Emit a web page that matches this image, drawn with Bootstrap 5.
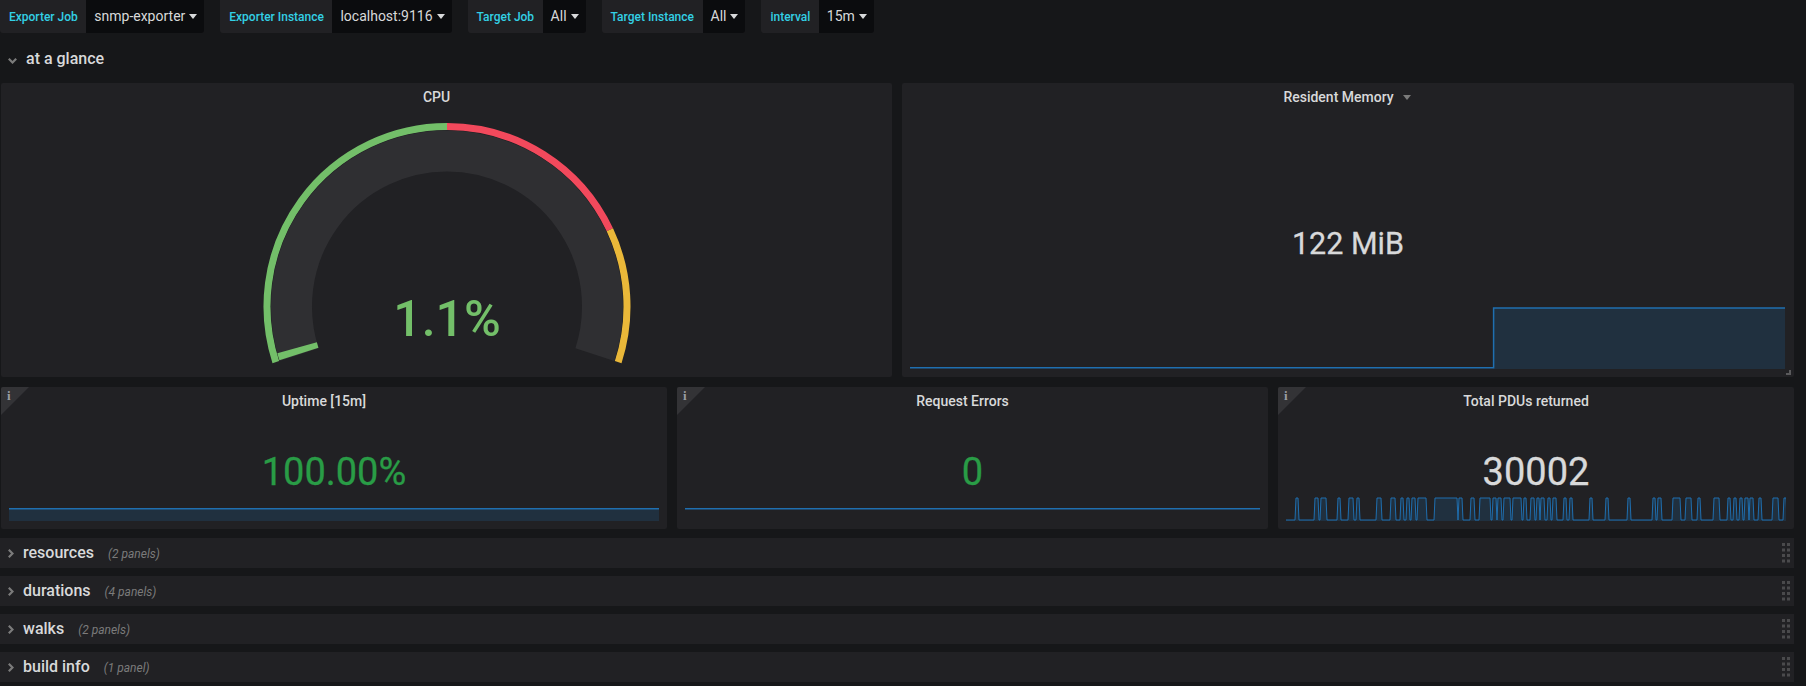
<!DOCTYPE html>
<html lang="en">
<head>
    <meta charset="UTF-8">
    <meta name="viewport" content="width=device-width, initial-scale=1.0">
    <title>SNMP Exporter</title>
    <link href="https://cdn.jsdelivr.net/npm/bootstrap@5.3.2/dist/css/bootstrap.min.css" rel="stylesheet">
    <style>
        body { background: #161719; color: #d8d9da; font-family: Roboto, "Liberation Sans", sans-serif; overflow: hidden; }
        .gf-page { width: 1794px; }

        /* template variables */
        .gf-vars { height: 33px; padding-left: 0; }
        .gf-var { height: 33px; border-radius: 0 0 3px 3px; overflow: hidden; }
        .gf-var-label { background: #212124; color: #33d0e5; font-size: 12px; font-weight: 500; padding: 0 8.5px 0 9px; border-right: 0; }
        .gf-var-value { background: #0b0c0e; color: #d8d9da; font-size: 14px; padding: 0 8px; white-space: nowrap; }
        .gf-var-value.dropdown-toggle::after { margin-left: 4px; margin-right: -1px; border-top-width: 5px; border-left-width: 4px; border-right-width: 4px; }

        /* rows */
        .gf-heading { height: 50px; padding: 2px 0 0 8px; font-size: 16px; font-weight: 500; }
        .gf-heading svg { margin-right: 9px; margin-top: 3px; }
        .gf-row { height: 30px; background: #212124; padding-left: 8px; padding-right: 4px; font-size: 16px; font-weight: 500; }
        .gf-row-title { margin-left: 9px; }
        .gf-row-count { margin-left: 14px; padding-top: 2px; color: #7b7b7b; font-size: 12px; font-weight: 400; font-style: italic; }

        /* panels */
        .gf-grid-top, .gf-grid-bottom { display: grid; column-gap: 10px; margin-left: 1px; }
        .gf-grid-top { grid-template-columns: 891px 892px; height: 294px; margin-bottom: 10px; }
        .gf-grid-bottom { grid-template-columns: 666px 591px 516px; height: 142px; margin-bottom: 9px; }
        .gf-panel { background: #212124; border-radius: 2px; position: relative; overflow: hidden; }
        .gf-panel-title { height: 28px; padding-right: 20px; font-size: 14px; font-weight: 500; line-height: 28px; text-align: center; flex-shrink: 0; }
        .gf-panel-title.has-caret { padding-right: 2px; }
        .gf-title-caret { display: inline-block; margin-left: 9px; vertical-align: 2px; border-top: 5px solid #7b7b7b; border-left: 4.5px solid transparent; border-right: 4.5px solid transparent; }
        .gf-stat { flex-grow: 1; display: flex; align-items: center; justify-content: center; line-height: 1; -webkit-text-stroke: .3px currentColor; }
        .gf-stat-mem { padding-top: 71px; font-size: 30.5px; }
        .gf-stat-big { padding-top: 31px; font-size: 38px; }
        .gf-green { color: #299c46; }
        .gf-spark { display: block; flex-shrink: 0; }
        .gf-spark-mem { margin-bottom: 7px; }
        .gf-gauge { display: block; margin: 0 auto; }
        .gf-gauge-text { font-family: Roboto, "Liberation Sans", sans-serif; font-size: 50px; font-weight: 500; fill: #73bf69; text-anchor: middle; }

        /* overlays on a panel */
        .gf-corner { position: absolute; top: 0; left: 0; border-top: 28px solid #333336; border-right: 28px solid transparent; }
        .gf-corner-i { position: absolute; top: 2px; left: 6px; font-family: "Liberation Serif", serif; font-size: 13px; font-weight: 700; line-height: 14px; color: #9a9ea5; }
        .gf-resize { position: absolute; right: 3px; bottom: 2px; width: 5px; height: 5px; border-right: 2px solid #5a5a5c; border-bottom: 2px solid #5a5a5c; }
    </style>
</head>
<body>
<div class="gf-page">

    <!-- Variables -->
    <div class="gf-vars d-flex gap-3">
        <div class="gf-var d-flex align-items-center">
            <div class="gf-var-label h-100 d-flex align-items-center">Exporter Job</div>
            <div class="gf-var-value h-100 d-flex align-items-center dropdown-toggle">snmp-exporter</div>
        </div>
        <div class="gf-var d-flex align-items-center">
            <div class="gf-var-label h-100 d-flex align-items-center">Exporter Instance</div>
            <div class="gf-var-value h-100 d-flex align-items-center dropdown-toggle">localhost:9116</div>
        </div>
        <div class="gf-var d-flex align-items-center">
            <div class="gf-var-label h-100 d-flex align-items-center">Target Job</div>
            <div class="gf-var-value h-100 d-flex align-items-center dropdown-toggle">All</div>
        </div>
        <div class="gf-var d-flex align-items-center">
            <div class="gf-var-label h-100 d-flex align-items-center">Target Instance</div>
            <div class="gf-var-value h-100 d-flex align-items-center dropdown-toggle">All</div>
        </div>
        <div class="gf-var d-flex align-items-center">
            <div class="gf-var-label h-100 d-flex align-items-center">interval</div>
            <div class="gf-var-value h-100 d-flex align-items-center dropdown-toggle">15m</div>
        </div>
    </div>

    <div class="gf-heading d-flex align-items-center">
        <svg width="9" height="6" viewBox="0 0 9 6"><path d="M.8 .8l3.7 3.7L8.200 .8" fill="none" stroke="#7b7b7b" stroke-width="2.2"/></svg>
        <span>at a glance</span>
    </div>

    <!-- First row of panels -->
    <div class="gf-grid-top">
        <div class="gf-panel d-flex flex-column">
            <div class="gf-panel-title">CPU</div>
            <svg class="gf-gauge" id="gauge" width="400" height="262" viewBox="0 0 400 262">
                <text class="gf-gauge-text" x="200" y="225">1.1%</text>
            </svg>
        </div>
        <div class="gf-panel d-flex flex-column">
            <div class="gf-panel-title has-caret">Resident Memory<span class="gf-title-caret"></span></div>
            <div class="gf-stat gf-stat-mem">122 MiB</div>
            <svg class="gf-spark gf-spark-mem ms-2" width="875" height="64" viewBox="0 0 875 64">
                <path d="M583.6 2H875V63H583.6z" fill="#20303f"/>
                <path d="M0 61.7H583.6V2H875" fill="none" stroke="#1f6fb0" stroke-width="1.5"/>
            </svg>
            <div class="gf-resize"></div>
        </div>
    </div>

    <!-- Second row of panels -->
    <div class="gf-grid-bottom">
        <div class="gf-panel d-flex flex-column">
            <div class="gf-corner"></div><div class="gf-corner-i">i</div>
            <div class="gf-panel-title">Uptime [15m]</div>
            <div class="gf-stat gf-stat-big gf-green">100.00%</div>
            <svg class="gf-spark ms-2" width="650" height="32" viewBox="0 0 650 32">
                <path d="M0 11.7H650V24H0z" fill="#20303f"/>
                <path d="M0 11.7H650" fill="none" stroke="#1f6fb0" stroke-width="1.5"/>
            </svg>
        </div>
        <div class="gf-panel d-flex flex-column">
            <div class="gf-corner"></div><div class="gf-corner-i">i</div>
            <div class="gf-panel-title">Request Errors</div>
            <div class="gf-stat gf-stat-big gf-green">0</div>
            <svg class="gf-spark ms-2" width="575" height="32" viewBox="0 0 575 32">
                <path d="M0 11.7H575" fill="none" stroke="#1f6fb0" stroke-width="1.5"/>
            </svg>
        </div>
        <div class="gf-panel d-flex flex-column">
            <div class="gf-corner"></div><div class="gf-corner-i">i</div>
            <div class="gf-panel-title">Total PDUs returned</div>
            <div class="gf-stat gf-stat-big">30002</div>
            <svg class="gf-spark ms-2" id="pdus" width="500" height="32" viewBox="0 0 500 32"></svg>
        </div>
    </div>

    <!-- Collapsed rows -->
    <div class="d-flex flex-column gap-2" id="rows"></div>
</div>

<script src="https://cdn.jsdelivr.net/npm/bootstrap@5.3.2/dist/js/bootstrap.bundle.min.js"></script>
<script>
    const svgNs = 'http://www.w3.org/2000/svg';

    function addPath(parent, d, attrs) {
        const el = document.createElementNS(svgNs, 'path');
        el.setAttribute('d', d);
        Object.keys(attrs).forEach(k => el.setAttribute(k, attrs[k]));
        parent.insertBefore(el, parent.firstChild);
    }

    // gauge, angles in degrees, clockwise
    function arc(r, from, to) {
        const cx = 200, cy = 195.5;
        const p = a => (cx + r * Math.cos(a * Math.PI / 180)).toFixed(2) + ' ' + (cy + r * Math.sin(a * Math.PI / 180)).toFixed(2);
        return `M${p(from)}A${r} ${r} 0 ${to - from > 180 ? 1 : 0} 1 ${p(to)}`;
    }

    const gauge = document.getElementById('gauge');
    addPath(gauge, arc(155.5, 162.2, 164.6), { fill: 'none', stroke: '#73bf69', 'stroke-width': 41 });
    addPath(gauge, arc(155.5, 162, 378), { fill: 'none', stroke: '#2f2f32', 'stroke-width': 41 });
    addPath(gauge, arc(180, 334.8, 378), { fill: 'none', stroke: '#eab839', 'stroke-width': 7 });
    addPath(gauge, arc(180, 270, 334.8), { fill: 'none', stroke: '#f2495c', 'stroke-width': 7 });
    addPath(gauge, arc(180, 162, 270), { fill: 'none', stroke: '#73bf69', 'stroke-width': 7 });

    // top of each PDU pulse, x from the left of the sparkline
    const pulses = [[10,12],[29,32],[35,40],[52,54],[63,67],[71,73],[91,95],[105,109],[115,117],[121,123],[126,129],[132,140],
        [149,171],[173,176],[185,188],[194,204],[207,210],[212,215],[218,224],[227,235],[238,240],[245,248],[251,253],
        [255,258],[262,264],[267,270],[278,280],[284,286],[304,306],[320,322],[342,344],[367,369],[372,375],[387,394],
        [400,405],[412,414],[428,433],[442,444],[448,450],[454,456],[459,462],[464,467],[473,475],[487,492],[498,500]];
    let line = 'M0 23';
    pulses.forEach(p => {
        line += `H${p[0] - 1}L${p[0]} 1H${p[1]}L${p[1] + 1} 23`;
    });
    line += 'H500';
    const pdus = document.getElementById('pdus');
    addPath(pdus, line, { fill: 'none', stroke: '#1f6fb0', 'stroke-width': 1 });
    addPath(pdus, line + 'V24H0z', { fill: '#20303f', stroke: 'none' });

    // collapsed rows
    const rows = [['resources', '(2 panels)'], ['durations', '(4 panels)'], ['walks', '(2 panels)'], ['build info', '(1 panel)']];
    document.getElementById('rows').innerHTML = rows.map(r => `
        <div class="gf-row d-flex align-items-center">
            <svg width="6" height="9" viewBox="0 0 6 9"><path d="M.8 .8l3.700 3.700L.8 8.200" fill="none" stroke="#7b7b7b" stroke-width="2.2"/></svg>
            <span class="gf-row-title">${r[0]}</span>
            <span class="gf-row-count">${r[1]}</span>
            <svg class="ms-auto" width="8" height="20" viewBox="0 0 8 20" fill="#4a4a4c">
                <rect x="0" y="0" width="3" height="3"/><rect x="5" y="0" width="3" height="3"/>
                <rect x="0" y="5.5" width="3" height="3"/><rect x="5" y="5.5" width="3" height="3"/>
                <rect x="0" y="11" width="3" height="3"/><rect x="5" y="11" width="3" height="3"/>
                <rect x="0" y="16.5" width="3" height="3"/><rect x="5" y="16.5" width="3" height="3"/>
            </svg>
        </div>`).join('');
</script>
</body>
</html>
